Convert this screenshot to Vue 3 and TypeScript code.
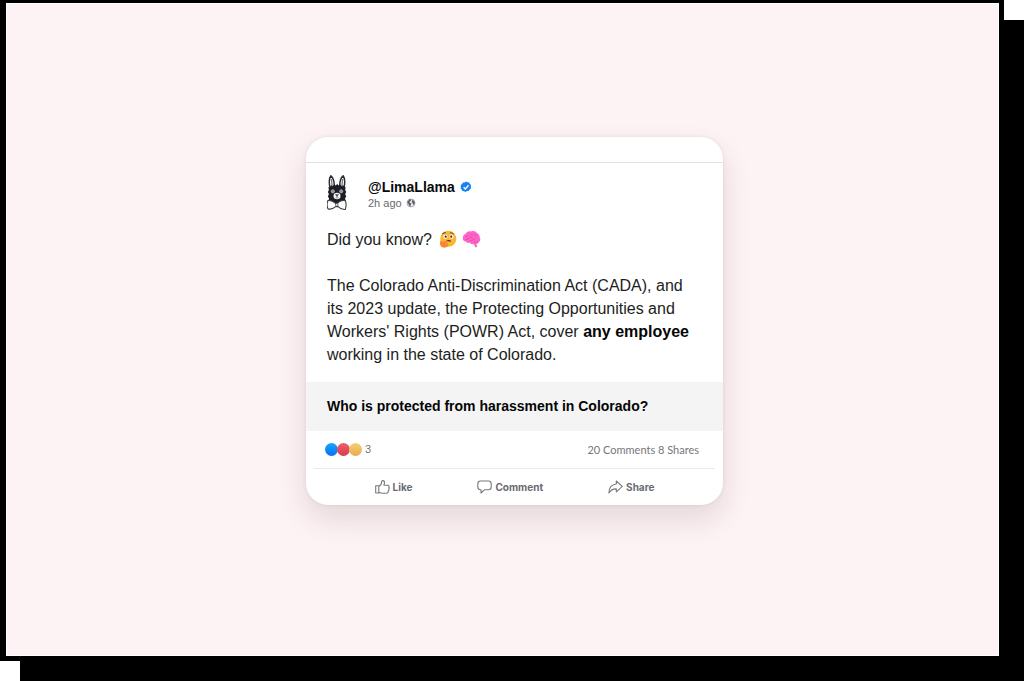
<script setup lang="ts">
interface Action {
  label: string
  icon: string
}

const reactions: string[] = ['like', 'love', 'haha']

const actions: Action[] = [
  {
    label: 'Like',
    icon: 'M.7 5.800h3.100v7.200H.7zM3.800 6.400C5.800 5.400 6.600 4 6.700 2c0-.9.5-1.400 1.200-1.400 1.400 0 1.900 1.500 1.400 3.100L8.900 5.200h3.700c1.400 0 1.900 1.200 1.200 2 .6.700.5 1.500-.1 2 .4.800.2 1.500-.5 1.900.2 1.300-.4 2.100-1.700 2.100H7c-1.300 0-1.900-.7-3.200-.8',
  },
  {
    label: 'Comment',
    icon: 'M3.500 1h8a2.700 2.700 0 0 1 2.700 2.700v3.400a2.700 2.700 0 0 1-2.700 2.700H7.400L4 13V9.800h-.5A2.700 2.700 0 0 1 .8 7.100V3.700A2.700 2.700 0 0 1 3.500 1z',
  },
  {
    label: 'Share',
    icon: 'M8.300 1l6 5.400-6 5.400V8.900C4.700 8.800 2.600 10.200.9 13 .9 8.300 3.300 4.500 8.300 4z',
  },
]
</script>

<template>
  <main class="page">
    <div class="frame">
      <article class="card">
        <div class="card-top"></div>

        <header class="author">
          <svg class="avatar" viewBox="0 0 20 36" aria-hidden="true">
            <path d="M3.200 14C1.900 8 2 3 3.900.8 6.300 2.500 7.400 6 7.400 13zM16.800 14c1.300-6 1.200-11-.7-13.200-2.400 1.700-3.500 5.200-3.500 12.200z" fill="#fff" stroke="#2b2c33" stroke-width="1.500" />
            <path d="M4.500 4l.7 8M15.500 4l-.7 8" stroke="#777" stroke-width="1.300" />
            <path d="M1.400 12l1.800.3.600-2.300 1.900 1.200 1.600-2.200 1.400 1.500L10.300 9l1.400 1.500 1.400-1.300 1.600 2 1.700-1.200.7 2.300 1.500-.3-.4 3 1 2-1 2 1 2.500-1.200 2 .8 2.500-2.200 2.500H3.500L1.300 26l.8-2.500-1.200-2 1-2.500-1-2 1-2z" fill="#1c1e27" />
            <circle cx="5.800" cy="16.300" r="1.600" fill="#8b8f94" stroke="#ccc" stroke-width=".6" />
            <circle cx="14.200" cy="16.300" r="1.600" fill="#8b8f94" stroke="#ccc" stroke-width=".6" />
            <ellipse cx="10" cy="21" rx="3.500" ry="3.200" fill="#f4f4f4" />
            <path d="M8.500 19.500h3L10 21.400zm1.500 1.500v1.400m-1.500.5h3" fill="#333" stroke="#555" stroke-width=".6" />
            <path d="M1 25.600c3-.6 5.300.8 7.600 2.800l2-.4c2.200-2 4.900-3.200 7.900-2.200.8 2.800.8 5.800-.2 8.600-2.800.3-5.500-.9-7.500-3l-2.200.3c-2.300 2-4.800 3-7.500 2.200-1.300-2.700-1.300-5.800-.1-8.300z" fill="#fff" stroke="#3c3d42" stroke-width="1.100" />
            <path d="M8.600 28.400l.3 3M10.800 28.200l.1 3" fill="none" stroke="#3c3d42" stroke-width=".8" />
          </svg>
          <div>
            <h1 class="name">
              @LimaLlama
              <svg class="verified" viewBox="0 0 12 12" role="img" aria-label="Verified">
                <path d="M6 .6l1.500.7 1.700.1.700 1.600 1.200 1.200-.3 1.700.2 1.700-1.400.9-.9 1.500-1.700.1-1.400 1-1.500-.8-1.700-.2-.7-1.500L.6 7.400l.3-1.700-.2-1.700 1.400-1L3 1.500l1.700-.1z" fill="#1682f5" />
                <path d="M3.600 6.200l1.800 1.700 3.100-3.600" fill="none" stroke="#fff" stroke-width="1.400" />
              </svg>
            </h1>
            <p class="meta">
              2h ago
              <svg class="globe" viewBox="0 0 10 10" role="img" aria-label="Public">
                <circle cx="5" cy="5" r="4" fill="#e8e8e8" stroke="#9a9c9f" stroke-width=".8" />
                <path d="M1.200 4.200L3.500 1.200l2 .3-.8 1.500-1 .6v1.200l1.600.8-.6 2-.7 1.300-1-2zM6.300 1.700l2 1.500.5 2.200-1.300 1.600-.9-1.800-.8-1z" fill="#5e6063" />
              </svg>
            </p>
          </div>
        </header>

        <div class="body">
          <p class="line">
            Did you know?
            <svg class="emoji" viewBox="0 0 18 18" role="img" aria-label="Thinking face">
              <circle cx="9.300" cy="8.800" r="8" fill="#fdb62f" />
              <path d="M3.400 4.200q1.500-1.800 3.400-1.500M11 2.800q2.400-.4 3.700 1.400" fill="none" stroke="#6c4a2d" stroke-width="1.100" />
              <circle cx="6.400" cy="6.700" r="2.100" fill="#fff" />
              <circle cx="12.500" cy="6.700" r="2.100" fill="#fff" />
              <circle cx="6.700" cy="6.700" r="1.100" fill="#3a302b" />
              <circle cx="12.200" cy="6.700" r="1.100" fill="#3a302b" />
              <path d="M7.300 11.500q2.300-1.700 4.500-.1" fill="none" stroke="#4f352a" stroke-width="1.300" />
              <path d="M1.300 10.300l2 1.700 4.800-1.300c1.300-.2 1.500 1.100.4 1.600l-2 .9 2.300.2c1 1.600-.2 3.800-2.500 4.200-3.500.5-5.400-1.200-5.300-4z" fill="#fb8535" />
            </svg>
            <svg class="emoji brain" viewBox="0 0 19 18" role="img" aria-label="Brain">
              <path d="M1 9C.3 6.500 1.800 4.300 3.700 3.800 4.800 1.700 7 1 9 1.500c2.300-1 4.800-.2 5.800 1.400 2 .6 3 2.400 2.800 4 1.300 1.800.8 4.200-.8 5.300-.6 1.200-1.700 1.600-2.500 1.500l1 3.200-2 .3-1.600-3.300c-1.700.6-3.300 0-4-1.300-1.800.7-3.400.2-4-1C2 11.400 1 10.400 1 9z" fill="#fd66c6" />
              <path d="M3.500 6.500q2 .8 3-1.200M8 3.500q1 2 3 1.300M12.500 4q.3 2 2.500 2.300M3.500 9.400q2.500.6 3.500-1.200t3.500-.5M7.600 12q.4-1.900 2.700-1.900t3.300-1.700M12 12.300q2.500.4 4-1.400" fill="none" stroke="#e83eaa" stroke-width=".8" />
            </svg>
          </p>
          <p class="fact">
            The Colorado Anti-Discrimination Act (CADA), and its 2023 update, the Protecting Opportunities and Workers' Rights (POWR) Act, cover <strong>any employee</strong> working in the state of Colorado.
          </p>
        </div>

        <h2 class="question">Who is protected from harassment in Colorado?</h2>

        <div class="stats">
          <span v-for="kind in reactions" :key="kind" class="reaction" :class="kind"></span>
          <span class="count">3</span>
          <span class="totals">20 Comments 8 Shares</span>
        </div>

        <footer class="actions">
          <button v-for="action in actions" :key="action.label" class="action" type="button">
            <svg class="action-icon" viewBox="0 0 15 14" aria-hidden="true">
              <path :d="action.icon" />
            </svg>
            {{ action.label }}
          </button>
        </footer>
      </article>
    </div>
  </main>
</template>

<style>
body {
  margin: 0;
  background: #fff;
}
</style>

<style scoped>
.page {
  box-sizing: border-box;
  display: flex;
  min-height: 100vh;
  padding: 0 20px 20px 0;
  overflow: hidden;
  font-family: "Liberation Sans", Arial, sans-serif;
}

.frame {
  box-sizing: border-box;
  flex: 1;
  display: flex;
  align-items: center;
  justify-content: center;
  padding: 0 0 18px 24px;
  border: solid #000;
  border-width: 3px 5px 5px 6px;
  background: #fdf2f4;
  box-shadow: inset 0 0 0 1px #fff, 20px 20px 0 #000;
}

.card {
  width: 100%;
  max-width: 417px;
  border-radius: 22px;
  background: #fff;
  box-shadow: 0 14px 30px rgba(50, 25, 30, 0.12), 0 0 4px rgba(50, 25, 30, 0.08);
  overflow: hidden;
}

.card-top {
  height: 25px;
  border-bottom: 1px solid #dfe0e1;
}

.author {
  display: flex;
  gap: 21px;
  padding: 12px 21px 0;
}

.avatar {
  width: 20px;
  height: 36px;
}

.name {
  display: flex;
  align-items: center;
  gap: 5px;
  margin: 3px 0 0;
  font-size: 14px;
  line-height: 18px;
  color: #080808;
}

.verified {
  width: 12px;
  height: 12px;
}

.meta {
  display: flex;
  align-items: center;
  gap: 4px;
  margin: 0;
  font-size: 11px;
  line-height: 14px;
  color: #696b6e;
}

.globe {
  width: 10px;
  height: 10px;
}

.body {
  padding: 17px 24px 16px 21px;
  font-size: 16px;
  line-height: 23px;
  color: #1c1e21;
}

.line {
  display: flex;
  align-items: center;
  margin: 0 0 23px;
}

.emoji {
  width: 18px;
  height: 18px;
  margin-left: 7px;
}

.brain {
  width: 19px;
  margin-left: 5px;
}

.fact {
  margin: 0;
}

.fact strong {
  color: #050505;
}

.question {
  margin: 0;
  padding: 13px 21px;
  background: #f4f4f4;
  font-size: 14px;
  line-height: 23px;
  color: #050505;
}

.stats {
  display: flex;
  align-items: center;
  height: 37px;
  margin: 0 8px;
  padding: 0 16px 0 11px;
  border-bottom: 1px solid #e9eaeb;
  font-size: 11px;
  color: #75777a;
}

.reaction {
  width: 13px;
  height: 13px;
  margin-right: -1px;
  border-radius: 50%;
}

.like {
  background: linear-gradient(#18a5fb, #0870f4);
}

.love {
  background: linear-gradient(#ee6070, #d83c4b);
}

.haha {
  background: linear-gradient(#f5cf73, #e8ac4e);
}

.count {
  margin-left: 4px;
}

.totals {
  margin-left: auto;
  font-family: Lato, "Open Sans", sans-serif;
  font-size: 11px;
}

.actions {
  display: flex;
  justify-content: center;
  gap: 65px;
  padding: 11px 8px 10px;
}

.action {
  display: flex;
  align-items: center;
  gap: 3px;
  padding: 0;
  border: 0;
  background: none;
  font-family: Inter, "Liberation Sans", sans-serif;
  font-size: 10px;
  font-weight: 700;
  line-height: 15px;
  color: #696b6e;
  cursor: pointer;
}

.action-icon {
  width: 15px;
  height: 14px;
  fill: none;
  stroke: #77797c;
  stroke-width: 1.1;
  stroke-linejoin: round;
}
</style>
